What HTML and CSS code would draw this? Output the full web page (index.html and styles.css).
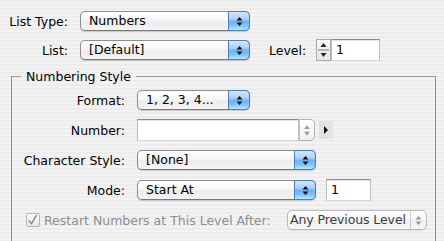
FILE: index.html
```html
<!DOCTYPE html>
<html>
<head>
<meta charset="utf-8">
<link rel="stylesheet" href="styles.css">
</head>
<body>
<div class="panel">
  <div class="row r1">
    <span class="lbl lbl-top">List Type:</span>
    <div class="popup w-top"><span class="pt">Numbers</span><span class="pa"><svg width="7" height="11" viewBox="0 0 7 11"><polygon points="3.5,1 6.5,4.5 0.5,4.5"/><polygon points="0.5,6.5 6.5,6.5 3.5,10"/></svg></span></div>
  </div>
  <div class="row r2">
    <span class="lbl lbl-top">List:</span>
    <div class="popup w-top"><span class="pt">[Default]</span><span class="pa"><svg width="7" height="11" viewBox="0 0 7 11"><polygon points="3.5,1 6.5,4.5 0.5,4.5"/><polygon points="0.5,6.5 6.5,6.5 3.5,10"/></svg></span></div>
    <span class="lvl">Level:</span>
    <div class="lstep"><svg width="13" height="20" viewBox="0 0 13 20"><polygon points="6.5,3 9.5,7 3.5,7" fill="#222"/><rect x="1" y="9.5" width="11" height="1" fill="#777"/><polygon points="3.5,13 9.5,13 6.5,17" fill="#222"/></svg></div>
    <div class="field w-lvl">1</div>
  </div>
  <fieldset class="group">
    <legend class="gtitle">Numbering Style</legend>
    <div class="gbody">
      <div class="row">
        <span class="lbl lbl-in">Format:</span>
        <div class="popup w-fmt"><span class="pt">1, 2, 3, 4...</span><span class="pa"><svg width="7" height="11" viewBox="0 0 7 11"><polygon points="3.5,1 6.5,4.5 0.5,4.5"/><polygon points="0.5,6.5 6.5,6.5 3.5,10"/></svg></span></div>
      </div>
      <div class="row">
        <span class="lbl lbl-in">Number:</span>
        <div class="combo">
          <div class="field cfield"></div>
          <div class="cstep"><svg width="15" height="20" viewBox="0 0 15 20"><polygon points="7.5,5 10.5,9 4.5,9" fill="#9a9a9a"/><polygon points="4.5,12 10.5,12 7.5,16" fill="#9a9a9a"/></svg></div>
        </div>
        <div class="tribtn"><svg width="14" height="18" viewBox="0 0 14 18"><polygon points="5,5 9,9 5,13" fill="#111"/></svg></div>
      </div>
      <div class="row">
        <span class="lbl lbl-in">Character Style:</span>
        <div class="popup w-wide"><span class="pt">[None]</span><span class="pa"><svg width="7" height="11" viewBox="0 0 7 11"><polygon points="3.5,1 6.5,4.5 0.5,4.5"/><polygon points="0.5,6.5 6.5,6.5 3.5,10"/></svg></span></div>
      </div>
      <div class="row">
        <span class="lbl lbl-in">Mode:</span>
        <div class="popup w-wide"><span class="pt">Start At</span><span class="pa"><svg width="7" height="11" viewBox="0 0 7 11"><polygon points="3.5,1 6.5,4.5 0.5,4.5"/><polygon points="0.5,6.5 6.5,6.5 3.5,10"/></svg></span></div>
        <div class="field w-mode">1</div>
      </div>
      <div class="row rrestart">
        <span class="check"><svg width="14" height="14" viewBox="0 0 14 14"><path d="M3 7.5 L6 11 L11.5 1.5" fill="none" stroke="#8c8c8c" stroke-width="1.6"/></svg></span>
        <span class="dis-text">Restart Numbers at This Level After:</span>
        <div class="popup dpopup"><span class="pt">Any Previous Level</span><span class="dpa"><svg width="7" height="11" viewBox="0 0 7 11"><polygon points="3.5,1 6.5,4.5 0.5,4.5" fill="#9a9a9a"/><polygon points="0.5,6.5 6.5,6.5 3.5,10" fill="#9a9a9a"/></svg></span></div>
      </div>
    </div>
  </fieldset>
</div>
</body>
</html>
```

FILE: styles.css
```css
html, body {
  margin: 0;
  padding: 0;
  height: 100%;
  overflow: hidden;
}
body {
  background: repeating-linear-gradient(to bottom, #ececec 0, #ececec 2px, #f3f3f3 2px, #f3f3f3 4px);
  font-family: "DejaVu Sans", "Liberation Sans", sans-serif;
  font-size: 12.5px;
  color: #000;
}
.panel {
  display: flex;
  flex-direction: column;
  padding-top: 10px;
}
.row {
  display: flex;
  align-items: center;
  height: 22px;
}
.r2 {
  margin-top: 7px;
}
.lbl {
  text-align: right;
  flex: none;
  white-space: nowrap;
}
.lbl-top {
  width: 68px;
  margin-right: 12px;
}
.lbl-in {
  width: 113px;
  margin-right: 12px;
}
.popup {
  display: flex;
  box-sizing: border-box;
  height: 20px;
  border: 1px solid #8e8e8e;
  border-bottom-color: #777;
  border-radius: 5px;
  background: linear-gradient(#ffffff, #f7f7f7 45%, #ececec 55%, #f4f4f4);
  box-shadow: 0 1px 1px rgba(0, 0, 0, 0.18);
  flex: none;
}
.pt {
  flex: 1;
  padding-left: 8px;
  line-height: 18px;
  white-space: nowrap;
  overflow: hidden;
}
.pa {
  width: 20px;
  margin: -1px -1px -1px 0;
  border: 1px solid #4b7cc0;
  border-radius: 0 5px 5px 0;
  background: linear-gradient(#d3e8fc, #a8d0f7 40%, #6eb2f4 52%, #7cc2fb 75%, #bfe6ff);
  display: flex;
  align-items: center;
  justify-content: center;
}
.pa svg {
  fill: #111;
}
.w-top {
  width: 170px;
}
.w-fmt {
  width: 113px;
}
.w-wide {
  width: 179px;
}
.lvl {
  margin-left: 19px;
  margin-right: 12px;
  width: 35px;
}
.lstep {
  box-sizing: border-box;
  width: 15px;
  height: 22px;
  border: 1px solid #a8a8a8;
  background: linear-gradient(#fbfbfb, #e4e4e4);
  display: flex;
}
.field {
  box-sizing: border-box;
  height: 22px;
  background: #fff;
  border: 1px solid;
  border-color: #8a8a8a #bdbdbd #d6d6d6 #bdbdbd;
  box-shadow: inset 0 1px 0 #e2e2e2;
  padding-left: 4px;
  line-height: 20px;
  flex: none;
}
.w-lvl {
  width: 49px;
}
.w-mode {
  width: 45px;
  margin-left: 10px;
}
.group {
  box-sizing: border-box;
  margin: 8px 8px 0 11px;
  padding: 0;
  border: 1px solid #8c8c8c;
  border-top-color: #9a9a9a;
  border-bottom: 0;
  height: 172px;
  min-width: 0;
  overflow: hidden;
}
.gtitle {
  margin-left: 9px;
  padding: 0 5px;
  line-height: 15px;
  font-size: 12.5px;
}
.gbody {
  display: flex;
  flex-direction: column;
  gap: 8px;
  padding-top: 5px;
  padding-right: 8px;
}
.combo {
  display: flex;
  width: 178px;
  height: 22px;
  flex: none;
}
.cfield {
  width: 162px;
}
.cstep {
  box-sizing: border-box;
  width: 16px;
  height: 22px;
  border: 1px solid #b0b0b0;
  border-left-color: #c4c4c4;
  border-radius: 0 5px 5px 0;
  background: linear-gradient(#ffffff, #f0f0f0);
  display: flex;
  align-items: center;
}
.tribtn {
  margin-left: 4px;
  width: 14px;
  height: 18px;
  background: #e2e2e2;
  display: flex;
}
.rrestart {
  padding-left: 14px;
}
.check {
  box-sizing: border-box;
  width: 14px;
  height: 14px;
  border: 1px solid #b4b4b4;
  border-radius: 2px;
  background: linear-gradient(#fdfdfd, #e8e8e8);
  display: flex;
  margin-right: 4px;
  flex: none;
}
.check svg {
  margin: -1px 0 0 -1px;
}
.dis-text {
  color: #8e8e8e;
  white-space: nowrap;
}
.dpopup {
  margin-left: auto;
  width: 140px;
  border-color: #b8b8b8;
  box-shadow: 0 1px 1px rgba(0, 0, 0, 0.08);
  background: linear-gradient(#fefefe, #f6f6f6 50%, #efefef 50%, #f6f6f6);
}
.dpopup .pt {
  color: #3a3a3a;
  padding-left: 2px;
  letter-spacing: -0.1px;
}
.dpa {
  width: 15px;
  flex: none;
  border-left: 1px solid #c8c8c8;
  display: flex;
  align-items: center;
  justify-content: center;
}
```
